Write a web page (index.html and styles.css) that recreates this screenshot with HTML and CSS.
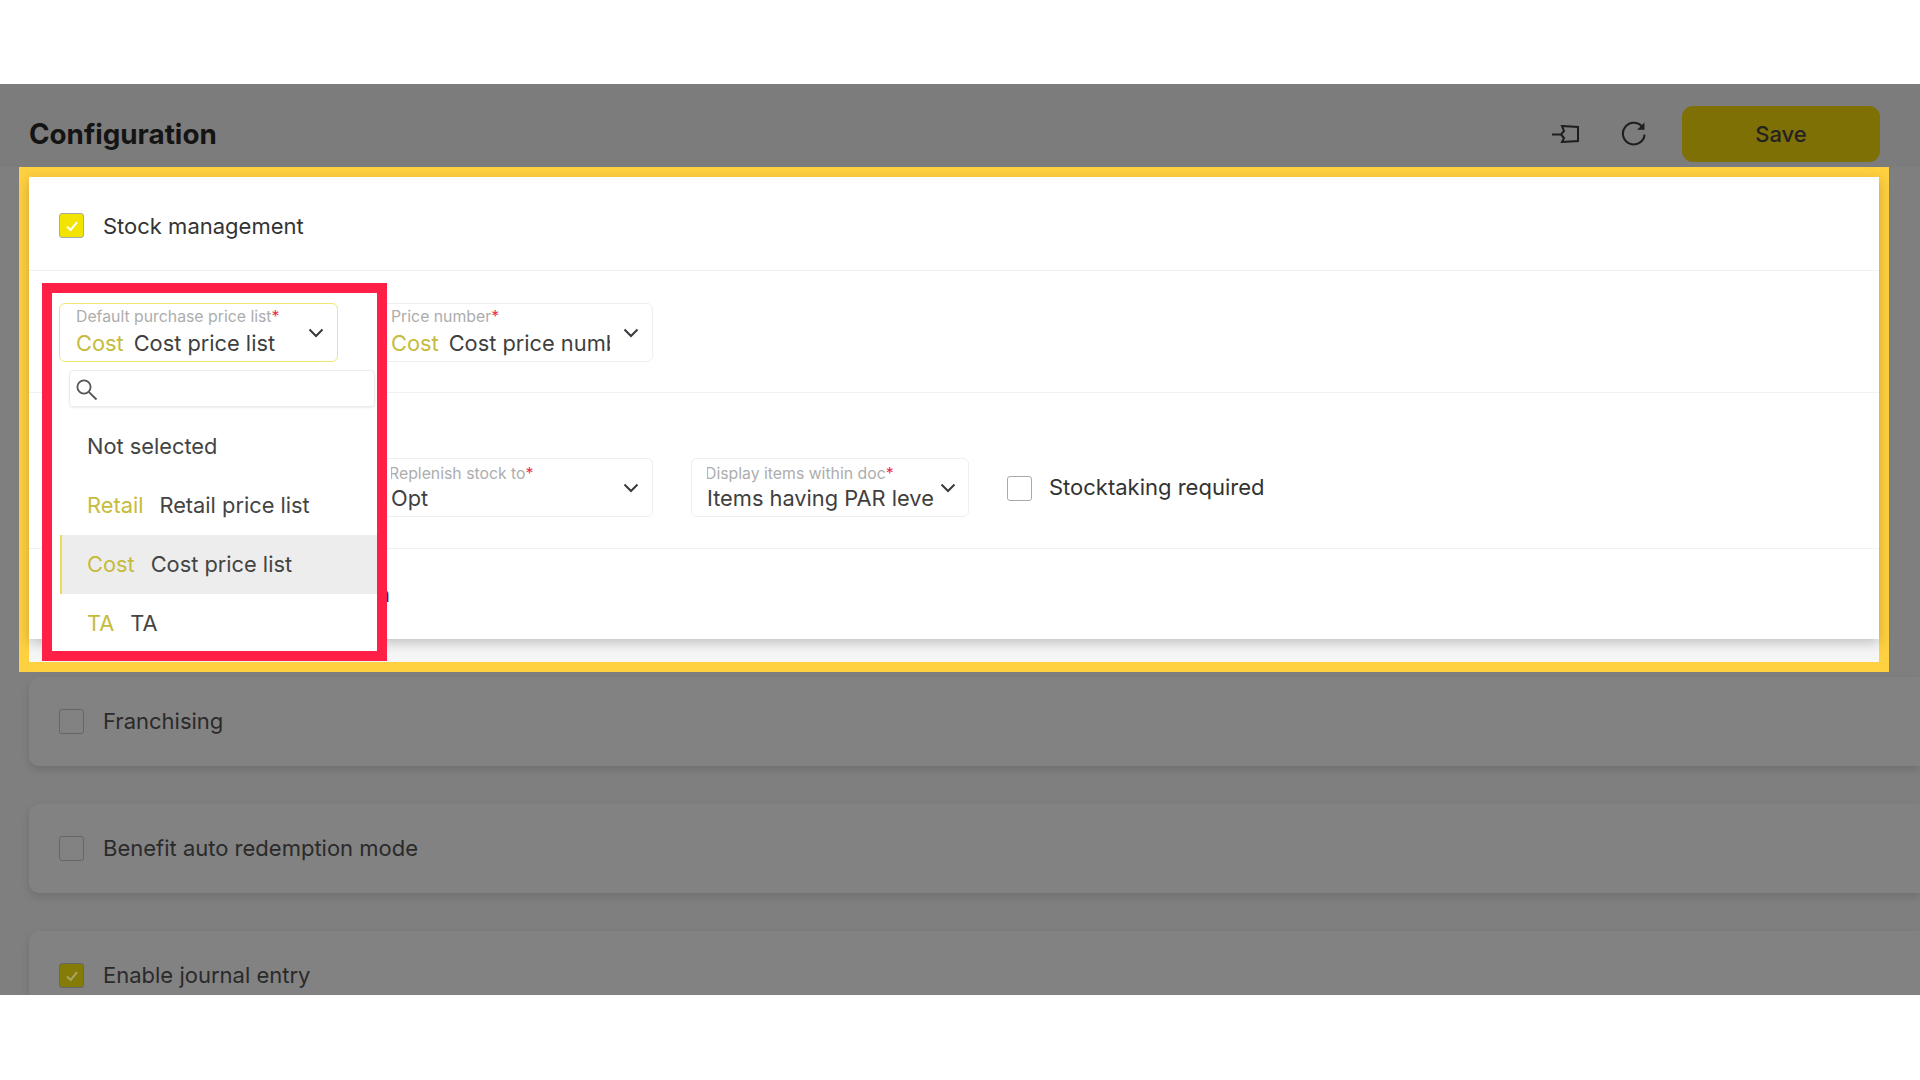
FILE: index.html
```html
<!DOCTYPE html>
<html lang="en">
<head>
<meta charset="utf-8">
<title>Configuration</title>
<link rel="stylesheet" href="styles.css">
</head>
<body>
<main class="stage">
  <header class="topbar">
    <h1 class="title">Configuration</h1>
    <div class="actions">
      <svg class="icon-pin" viewBox="0 0 30 18" aria-hidden="true"><path d="M3 9.5H12M13 1L29 2V16L13 17L15 13L12 9.5L15 6Z"/></svg>
      <svg class="icon-refresh" viewBox="0 0 24 24" aria-hidden="true"><path d="M21 6.5A10.4 10.4 0 1 0 22.6 13"/><path class="fill" d="M22.5 1.5V8.5H15.5Z"/></svg>
      <button class="save">Save</button>
    </div>
  </header>

  <section class="spotlight">
    <div class="card card-open">
      <div class="row row-head">
        <span class="check check-on"><svg viewBox="0 0 16 16"><path d="M3.5 8.5L6.8 11.5L12.5 4.5"/></svg></span>
        <span class="check-label">Stock management</span>
      </div>
      <div class="row row-fields row-prices">
        <div class="field field-ghost"></div>
        <div class="field">
          <div class="field-body">
            <div class="field-label">Price number<em>*</em></div>
            <div class="field-value"><span class="code">Cost</span><span>Cost price number</span></div>
          </div>
          <svg class="chev" viewBox="0 0 16 10"><path d="M1.5 1.5L8 8L14.5 1.5"/></svg>
        </div>
      </div>
      <div class="row row-fields row-stock">
        <div class="field field-ghost"></div>
        <div class="field">
          <div class="field-body">
            <div class="field-label label-shift">Replenish stock to<em>*</em></div>
            <div class="field-value"><span>Opt</span></div>
          </div>
          <svg class="chev" viewBox="0 0 16 10"><path d="M1.5 1.5L8 8L14.5 1.5"/></svg>
        </div>
        <div class="field field-display">
          <div class="field-body">
            <div class="field-label label-shift">Display items within doc<em>*</em></div>
            <div class="field-value"><span>Items having PAR level</span></div>
          </div>
          <svg class="chev" viewBox="0 0 16 10"><path d="M1.5 1.5L8 8L14.5 1.5"/></svg>
        </div>
        <span class="check"></span>
        <span class="check-label">Stocktaking required</span>
      </div>
      <div class="row row-tail"><span class="tail-text">n</span></div>
    </div>

    <div class="callout">
      <div class="field field-active">
        <div class="field-body">
          <div class="field-label">Default purchase price list<em>*</em></div>
          <div class="field-value"><span class="code">Cost</span><span>Cost price list</span></div>
        </div>
        <svg class="chev" viewBox="0 0 16 10"><path d="M1.5 1.5L8 8L14.5 1.5"/></svg>
      </div>
      <div class="menu">
        <div class="search">
          <svg class="icon-search" viewBox="0 0 22 22"><circle cx="8" cy="8" r="6.6"/><path d="M12.8 12.8L20.5 20.5"/></svg>
        </div>
        <ul class="options">
          <li class="option">Not selected</li>
          <li class="option"><span class="code">Retail</span><span>Retail price list</span></li>
          <li class="option option-current"><span class="code">Cost</span><span>Cost price list</span></li>
          <li class="option"><span class="code">TA</span><span>TA</span></li>
        </ul>
      </div>
    </div>
  </section>

  <section class="card card-dim">
    <span class="check check-dim"></span>
    <span class="check-label">Franchising</span>
  </section>
  <section class="card card-dim">
    <span class="check check-dim"></span>
    <span class="check-label">Benefit auto redemption mode</span>
  </section>
  <section class="card card-dim">
    <span class="check check-dim check-dim-on"><svg viewBox="0 0 16 16"><path d="M3.5 8.5L6.8 11.5L12.5 4.5"/></svg></span>
    <span class="check-label">Enable journal entry</span>
  </section>
</main>
</body>
</html>
```

FILE: styles.css
```css
* { box-sizing: border-box; }
html, body { margin: 0; padding: 0; height: 100%; background: #fff; overflow: hidden; }
body { font-family: Inter, Roboto, "Liberation Sans", sans-serif; color: #3c3c3c; padding-top: 84px; }

.stage { height: 911px; overflow: hidden; background: #7f7f7f; display: flex; flex-direction: column; }

.topbar { flex: none; height: 83px; padding: 17px 40px 0 29px; display: flex; align-items: center; justify-content: space-between; background: #7c7c7c; }
.title { margin: 0; font-size: 27.8px; font-weight: 700; color: #141414; }
.actions { display: flex; align-items: center; padding-bottom: 1px; }
.icon-pin { width: 30px; height: 18px; fill: none; stroke: #1e1e1e; stroke-width: 2; margin-right: 42px; }
.icon-refresh { width: 25px; height: 25px; fill: none; stroke: #1e1e1e; stroke-width: 2; margin-right: 36px; }
.icon-refresh .fill { fill: #1e1e1e; stroke: none; }
.save { width: 198px; height: 56px; border: 0; border-radius: 11px; padding-bottom: 1px; background: #7f7006; color: #232323; font: 500 22px Inter, Roboto, sans-serif; }

.spotlight { flex: none; position: relative; width: 1870px; height: 505px; margin-left: 19px; border: 10px solid #ffd040; background: #f6f6f6; }

.card { background: #fff; }
.card-open { height: 462px; box-shadow: 0 4px 12px rgba(0,0,0,.22); }
.row { display: flex; padding-left: 30px; border-bottom: 1px solid #f1f1f1; }
.row-head { height: 94px; align-items: center; padding-top: 4px; }
.row-fields { align-items: flex-start; }
.row-prices { height: 122px; padding-top: 32px; column-gap: 36px; }
.row-stock { height: 156px; padding-top: 65px; column-gap: 36px; }
.row-tail { border-bottom: 0; height: 90px; padding-left: 0; align-items: center; }
.tail-text { margin-left: 348px; font-size: 22px; color: #333; }

.check { flex: none; width: 25px; height: 25px; border: 1.5px solid #a9a9a9; border-radius: 3px; display: flex; align-items: center; justify-content: center; background: #fff; }
.check svg { width: 18px; height: 18px; fill: none; stroke: #fff; stroke-width: 1.8; }
.check-on { background: #f3e300; }
.check-label { font-size: 22px; margin-left: 19px; color: #333; }
.row-stock .check { margin: 18px 0 0 2px; }
.row-stock .check-label { margin: 16px 0 0 -19px; }

.field { flex: none; position: relative; width: 279px; height: 59px; border: 1px solid #eeeeee; border-radius: 6px; background: #fff; display: flex; align-items: center; padding: 0 13px 0 16px; }
.field-ghost { border-color: transparent; }
.field-body { flex: 1; min-width: 0; overflow: hidden; margin-right: 13px; align-self: flex-start; padding-top: 4px; }
.field-label { font-size: 15.8px; line-height: 18px; color: #adadad; white-space: nowrap; }
.field-label em { color: #ee2a48; font-style: normal; }
.label-shift { margin: 2px 0 -2px -2px; }
.field-value { font-size: 21.8px; line-height: 28px; margin-top: 3px; white-space: nowrap; display: flex; column-gap: 10px; color: #3f3f3f; }
.code { color: #c6bb3c; }
.chev { flex: none; width: 16px; height: 10px; fill: none; stroke: #3a3a3a; stroke-width: 2; }
.field-display { width: 278px; padding: 0 12px 0 15px; margin-left: 2px; }
.field-display .field-body { margin-right: 6px; }

.callout { position: absolute; left: 13px; top: 106px; width: 345px; height: 378px; border: 10px solid #ff1f47; background: #fff; padding: 10px 0 0 7px; overflow: hidden; display: flex; flex-direction: column; }
.field-active { border: 1.5px solid #f2e673; }
.menu { flex: 1; margin-left: 1px; display: flex; flex-direction: column; }
.search { height: 37px; margin: 8px 2px 0 9px; border: 1px solid #ececec; border-radius: 4px; box-shadow: 0 1px 2px rgba(0,0,0,.08); padding: 8px 0 0 6px; }
.icon-search { display: block; width: 22px; height: 22px; fill: none; stroke: #555; stroke-width: 1.8; }
.options { list-style: none; margin: 10px 0 0; padding: 0; }
.option { height: 59px; padding: 0 0 2px 27px; display: flex; align-items: center; column-gap: 16px; font-size: 21.8px; color: #444; }
.option-current { background: #ededed; box-shadow: inset 2px 0 0 #e8dd55; }

.card-dim { flex: none; height: 89px; margin: 0 0 38px 29px; background: #828282; border-radius: 10px 0 0 10px; box-shadow: 0 4px 8px rgba(0,0,0,.12); display: flex; align-items: center; padding-left: 30px; }
.spotlight + .card-dim { margin-top: 5px; }
.check-dim { background: transparent; border-color: #666; }
.check-dim-on { background: #857c08; }
.check-dim-on svg { stroke: #a8a468; }
.card-dim .check-label { color: #2a2a2a; padding-bottom: 2px; }
```
